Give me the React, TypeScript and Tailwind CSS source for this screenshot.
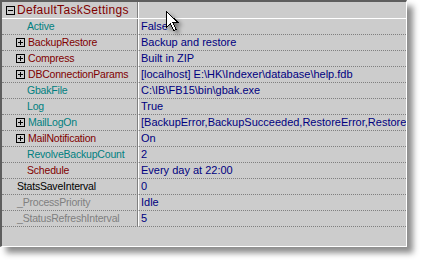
const maroon = "text-[#800000]";
const teal = "text-[#008080]";

type Row = {
  name: string;
  value: string;
  color: string;
  kind: "plus" | "child" | "top";
};

const rows: Row[] = [
  { name: "Active", value: "False", color: teal, kind: "child" },
  { name: "BackupRestore", value: "Backup and restore", color: maroon, kind: "plus" },
  { name: "Compress", value: "Built in ZIP", color: maroon, kind: "plus" },
  { name: "DBConnectionParams", value: "[localhost] E:\\HK\\Indexer\\database\\help.fdb", color: maroon, kind: "plus" },
  { name: "GbakFile", value: "C:\\IB\\FB15\\bin\\gbak.exe", color: teal, kind: "child" },
  { name: "Log", value: "True", color: teal, kind: "child" },
  { name: "MailLogOn", value: "[BackupError,BackupSucceeded,RestoreError,RestoreSucceeded]", color: teal, kind: "plus" },
  { name: "MailNotification", value: "On", color: maroon, kind: "plus" },
  { name: "RevolveBackupCount", value: "2", color: teal, kind: "child" },
  { name: "Schedule", value: "Every day at 22:00", color: maroon, kind: "child" },
  { name: "StatsSaveInterval", value: "0", color: "text-black", kind: "top" },
  { name: "_ProcessPriority", value: "Idle", color: "text-[#808080]", kind: "top" },
  { name: "_StatusRefreshInterval", value: "5", color: "text-[#808080]", kind: "top" },
];

const Box = ({ plus }: { plus?: boolean }) => (
  <svg width="9" height="9" viewBox="0 0 9 9" shapeRendering="crispEdges" className="shrink-0">
    <rect x="0.5" y="0.5" width="8" height="8" fill="none" stroke="#000" />
    <line x1="2" y1="4.5" x2="7" y2="4.5" stroke="#000" />
    {plus && <line x1="4.5" y1="2" x2="4.5" y2="7" stroke="#000" />}
  </svg>
);

const Cursor = () => (
  <svg
    width="14"
    height="22"
    viewBox="0 0 14 22"
    shapeRendering="crispEdges"
    className="absolute left-[166px] top-[11px] drop-shadow-[3px_3px_2px_rgba(0,0,0,0.45)]"
  >
    <path
      d="M0.5 0.5 L0.5 16.5 L4.5 12.5 L7.5 19.5 L10 18.5 L7 11.5 L12 11.5 Z"
      fill="#fff"
      stroke="#000"
    />
  </svg>
);

export default function App() {
  return (
    <div className="relative w-[422px] h-[261px] bg-white font-['Liberation_Sans',Arial,sans-serif] text-[11px]">
      <div className="flex flex-col w-[407px] h-[247px] overflow-hidden bg-[#cccccc] border-t-2 border-l-2 border-t-[#5e5e5e] border-l-[#5e5e5e] border-r border-b border-r-white border-b-white shadow-[6px_6px_6px_rgba(0,0,0,0.45)]">
        <div className="flex h-[17px] border-b border-white">
          <div className="flex items-center gap-[2px] w-[136px] pl-[4px] border-r border-[#808080] leading-[16px] text-[12px] tracking-[0.3px] text-[#800000]">
            <Box />
            <span>DefaultTaskSettings</span>
          </div>
          <div className="flex-1 border-l border-white" />
        </div>

        {rows.map((r) => (
          <div key={r.name} className="flex h-[16px] border-b border-dotted border-[#808080] leading-[15px]">
            <div
              className={`flex items-center w-[136px] border-r border-solid border-r-[#808080] whitespace-nowrap text-[10.5px] tracking-[-0.2px] ${r.color} ${
                r.kind === "plus" ? "pl-[14px] gap-[3px]" : r.kind === "child" ? "pl-[25px]" : "pl-[15px]"
              }`}
            >
              {r.kind === "plus" && <Box plus />}
              <span>{r.name}</span>
            </div>
            <div className="flex-1 pl-[2px] border-l border-solid border-l-white overflow-hidden whitespace-nowrap text-[#000080]">
              {r.value}
            </div>
          </div>
        ))}

        <div className="flex-1" />
      </div>
      <Cursor />
    </div>
  );
}
